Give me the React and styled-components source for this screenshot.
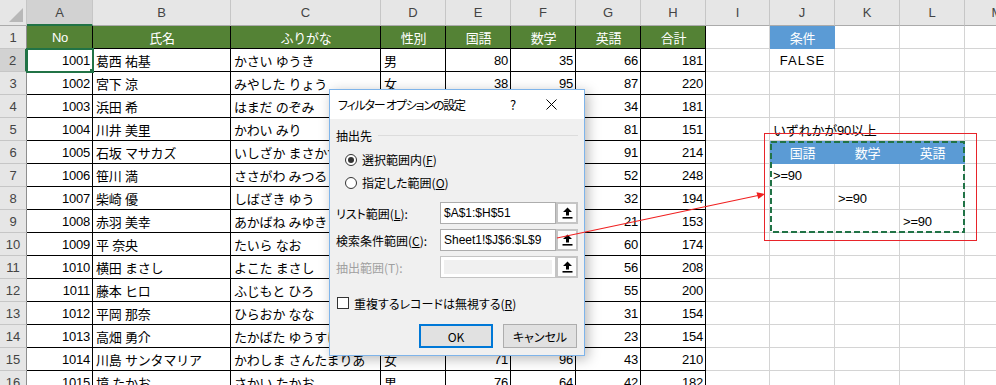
import styled, { createGlobalStyle } from "styled-components";

const GlobalStyle = createGlobalStyle`
  body {
    margin: 0;
    overflow: hidden;
    background: #fff;
    font-family: "Liberation Sans", "Noto Sans CJK JP", sans-serif;
  }
`;

const COLS = [27, 66, 138, 150, 65, 65, 65, 65, 65, 64, 65, 65, 65, 65];
const LETTERS = ["A", "B", "C", "D", "E", "F", "G", "H", "I", "J", "K", "L", "M"];

const HEADERS = ["No", "氏名", "ふりがな", "性別", "国語", "数学", "英語", "合計"];

const ROWS = [
  [1001, "葛西 祐基", "かさい ゆうき", "男", 80, 35, 66, 181],
  [1002, "宮下 涼", "みやした りょう", "女", 38, 95, 87, 220],
  [1003, "浜田 希", "はまだ のぞみ", "女", 72, 75, 34, 181],
  [1004, "川井 美里", "かわい みり", "女", 35, 35, 81, 151],
  [1005, "石坂 マサカズ", "いしざか まさかず", "男", 60, 63, 91, 214],
  [1006, "笹川 満", "ささがわ みつる", "男", 98, 98, 52, 248],
  [1007, "柴崎 優", "しばざき ゆう", "男", 80, 82, 32, 194],
  [1008, "赤羽 美幸", "あかばね みゆき", "女", 66, 66, 21, 153],
  [1009, "平 奈央", "たいら なお", "女", 57, 57, 60, 174],
  [1010, "横田 まさし", "よこた まさし", "男", 76, 76, 56, 208],
  [1011, "藤本 ヒロ", "ふじもと ひろ", "男", 72, 73, 55, 200],
  [1012, "平岡 那奈", "ひらおか なな", "女", 61, 62, 31, 154],
  [1013, "高畑 勇介", "たかばた ゆうすけ", "男", 65, 66, 23, 154],
  [1014, "川島 サンタマリア", "かわしま さんたまりあ", "女", 71, 96, 43, 210],
  [1015, "境 たかお", "さかい たかお", "男", 76, 64, 42, 182],
];

// J, K, L の内容（行番号ごと）
const SIDE = {
  1: [{ text: "条件", tone: "blue", align: "center" }, {}, {}],
  2: [{ text: "FALSE", align: "center", wide: true }, {}, {}],
  5: [{ text: "いずれかが90以上", spill: true }, {}, {}],
  6: [
    { text: "国語", tone: "blue", align: "center" },
    { text: "数学", tone: "blue", align: "center" },
    { text: "英語", tone: "blue", align: "center" },
  ],
  7: [{ text: ">=90" }, {}, {}],
  8: [{}, { text: ">=90" }, {}],
  9: [{}, {}, { text: ">=90" }],
};

const TONES = {
  data: { bg: "#fff", line: "#000", color: "#000" },
  head: { bg: "#548235", line: "#000", color: "#fff" },
  grid: { bg: "transparent", line: "#d4d4d4", color: "#000" },
  blue: { bg: "#5b9bd5", line: "#5b9bd5", color: "#fff" },
};

const Page = styled.div`
  position: relative;
  width: 996px;
  height: 385px;
  overflow: hidden;
  background: #fff;
`;

const Sheet = styled.div`
  display: grid;
  grid-template-columns: ${COLS.map((w) => w + "px").join(" ")};
  grid-template-rows: 26px repeat(16, 23px);
`;

const ColHead = styled.div`
  box-sizing: border-box;
  display: flex;
  align-items: center;
  justify-content: center;
  position: relative;
  background: ${(p) => (p.$active ? "#d2d2d2" : "#e6e6e6")};
  border-right: 1px solid #c6c6c6;
  border-bottom: ${(p) => (p.$active ? "2px solid #217346" : "1px solid #ababab")};
  color: #444;
  font-size: 13px;
`;

const CornerMark = styled.span`
  position: absolute;
  right: 3px;
  bottom: 3px;
  width: 0;
  height: 0;
  border-left: 14px solid transparent;
  border-bottom: 14px solid #b8b8b8;
`;

const RowHead = styled.div`
  box-sizing: border-box;
  display: flex;
  align-items: center;
  justify-content: center;
  background: ${(p) => (p.$active ? "#d2d2d2" : "#e6e6e6")};
  border-right: ${(p) => (p.$active ? "2px solid #217346" : "1px solid #8e8e8e")};
  border-bottom: 1px solid #c6c6c6;
  color: #444;
  font-size: 13px;
`;

const Cell = styled.div`
  box-sizing: border-box;
  position: relative;
  display: flex;
  align-items: center;
  justify-content: ${(p) =>
    p.$align === "right" ? "flex-end" : p.$align === "center" ? "center" : "flex-start"};
  padding: 0 2px 0 3px;
  background: ${(p) => TONES[p.$tone].bg};
  color: ${(p) => TONES[p.$tone].color};
  border-right: 1px solid ${(p) => TONES[p.$tone].line};
  border-bottom: 1px solid ${(p) => TONES[p.$tone].line};
  font-size: 13px;
  letter-spacing: ${(p) => (p.$wide ? "1px" : "-0.2px")};
  white-space: nowrap;
  overflow: ${(p) => (p.$spill ? "visible" : "hidden")};
  z-index: ${(p) => (p.$active ? 2 : 0)};
  outline: ${(p) => (p.$active ? "2px solid #217346" : "none")};
  outline-offset: -1px;

  &::after {
    content: "";
    display: ${(p) => (p.$active ? "block" : "none")};
    position: absolute;
    right: -4px;
    bottom: -4px;
    width: 5px;
    height: 5px;
    background: #217346;
    border: 1px solid #fff;
  }
`;

const Overlay = styled.svg`
  position: absolute;
  left: 0;
  top: 0;
  pointer-events: none;
  z-index: 20;
`;

/* ---- dialog ---- */

const Dialog = styled.div`
  position: absolute;
  left: 329px;
  top: 89px;
  width: 256px;
  box-sizing: border-box;
  border: 1px solid #7eb4ea;
  background: #f0f0f0;
  box-shadow: 3px 3px 12px rgba(0, 0, 0, 0.28);
  font-family: "Noto Sans CJK JP", sans-serif;
  font-feature-settings: "palt";
  font-size: 12px;
  color: #000;
  z-index: 10;
`;

const TitleBar = styled.div`
  display: flex;
  align-items: center;
  height: 29px;
  padding: 0 18px 0 8px;
  background: #fff;
  gap: 8px;
`;

const Title = styled.div`
  flex: 1;
  letter-spacing: -1.2px;
`;

const TitleButton = styled.div`
  width: 30px;
  display: flex;
  justify-content: center;
  font-size: 13px;
`;

const Body = styled.div`
  display: flex;
  flex-direction: column;
  padding: 6px 6px 7px 6px;
`;

const GroupHead = styled.div`
  display: flex;
  align-items: center;
  height: 20px;
  gap: 6px;

  &::after {
    content: "";
    flex: 1;
    height: 1px;
    background: #dcdcdc;
  }
`;

const RadioList = styled.div`
  display: flex;
  flex-direction: column;
  padding: 3px 0 0 9px;
`;

const OptionRow = styled.label`
  display: flex;
  align-items: center;
  height: ${(p) => p.$h || 23}px;
  gap: 5px;
  margin-top: ${(p) => p.$mt || 0}px;
`;

const Radio = styled.span`
  box-sizing: border-box;
  width: 12px;
  height: 12px;
  border-radius: 50%;
  border: 1px solid #333;
  background: #fff;
  display: flex;
  align-items: center;
  justify-content: center;

  &::after {
    content: "";
    display: ${(p) => (p.$checked ? "block" : "none")};
    width: 6px;
    height: 6px;
    border-radius: 50%;
    background: #333;
  }
`;

const Check = styled.span`
  box-sizing: border-box;
  width: 12px;
  height: 12px;
  border: 1px solid #333;
  background: #fff;
  margin-left: 1px;
`;

const FieldRow = styled.div`
  display: flex;
  align-items: center;
  height: 22px;
  margin-top: ${(p) => p.$mt}px;
`;

const FieldLabel = styled.div`
  width: 104px;
  color: ${(p) => (p.$disabled ? "#a0a0a0" : "#000")};
`;

const FieldInput = styled.div`
  box-sizing: border-box;
  width: 116px;
  height: 22px;
  display: flex;
  align-items: center;
  padding: ${(p) => (p.$disabled ? "3px" : "0 3px")};
  border: 1px solid ${(p) => (p.$disabled ? "#c4c4c4" : "#adadad")};
  background: #fff;
  font-family: "Liberation Sans", sans-serif;
  font-size: 12px;
`;

const DisabledFill = styled.div`
  width: 100%;
  height: 100%;
  background: #f0f0f0;
`;

const PickButton = styled.div`
  box-sizing: border-box;
  width: 22px;
  height: 22px;
  display: flex;
  align-items: center;
  justify-content: center;
  border: 2px solid #c4c4c4;
  background: #fcfcfc;
`;

const Buttons = styled.div`
  display: flex;
  justify-content: flex-end;
  gap: 10px;
  margin-top: 11px;
  padding-right: 1px;
`;

const Button = styled.div`
  box-sizing: border-box;
  width: 74px;
  height: 24px;
  display: flex;
  align-items: center;
  justify-content: center;
  background: #e1e1e1;
  border: ${(p) => (p.$primary ? "2px solid #0078d7" : "1px solid #adadad")};
`;

function PickIcon() {
  return (
    <svg width="11" height="12" viewBox="0 0 11 12">
      <path d="M5.5 0.5 L10 5 H7 V8.5 H4 V5 H1 Z" fill="#000" />
      <rect x="0.5" y="10" width="10" height="1.6" fill="#000" />
    </svg>
  );
}

function CloseIcon() {
  return (
    <svg width="11" height="11" viewBox="0 0 11 11">
      <path d="M0.5 0.5 L10.5 10.5 M10.5 0.5 L0.5 10.5" stroke="#000" strokeWidth="1" />
    </svg>
  );
}

function FilterDialog() {
  return (
    <Dialog>
      <TitleBar>
        <Title>フィルター オプションの設定</Title>
        <TitleButton>?</TitleButton>
        <TitleButton>
          <CloseIcon />
        </TitleButton>
      </TitleBar>
      <Body>
        <GroupHead>抽出先</GroupHead>
        <RadioList>
          <OptionRow>
            <Radio $checked />
            <span>
              選択範囲内(<u>F</u>)
            </span>
          </OptionRow>
          <OptionRow>
            <Radio />
            <span>
              指定した範囲(<u>O</u>)
            </span>
          </OptionRow>
        </RadioList>
        <FieldRow $mt={8}>
          <FieldLabel>
            リスト範囲(<u>L</u>):
          </FieldLabel>
          <FieldInput>$A$1:$H$51</FieldInput>
          <PickButton>
            <PickIcon />
          </PickButton>
        </FieldRow>
        <FieldRow $mt={5}>
          <FieldLabel>
            検索条件範囲(<u>C</u>):
          </FieldLabel>
          <FieldInput>Sheet1!$J$6:$L$9</FieldInput>
          <PickButton>
            <PickIcon />
          </PickButton>
        </FieldRow>
        <FieldRow $mt={5}>
          <FieldLabel $disabled>抽出範囲(T):</FieldLabel>
          <FieldInput $disabled>
            <DisabledFill />
          </FieldInput>
          <PickButton>
            <PickIcon />
          </PickButton>
        </FieldRow>
        <OptionRow $h={20} $mt={15}>
          <Check />
          <span>
            重複するレコードは無視する(<u>R</u>)
          </span>
        </OptionRow>
        <Buttons>
          <Button $primary>OK</Button>
          <Button>キャンセル</Button>
        </Buttons>
      </Body>
    </Dialog>
  );
}

function SheetGrid() {
  const cells = [];

  cells.push(
    <ColHead key="corner">
      <CornerMark />
    </ColHead>
  );
  LETTERS.forEach((l, i) =>
    cells.push(
      <ColHead key={"c" + l} $active={i === 0}>
        {l}
      </ColHead>
    )
  );

  for (let r = 1; r <= 16; r++) {
    cells.push(
      <RowHead key={"r" + r} $active={r === 2}>
        {r}
      </RowHead>
    );

    for (let c = 0; c < 8; c++) {
      if (r === 1) {
        cells.push(
          <Cell key={`${r}-${c}`} $tone="head" $align="center">
            {HEADERS[c]}
          </Cell>
        );
      } else {
        const v = ROWS[r - 2][c];
        const isNum = typeof v === "number";
        cells.push(
          <Cell
            key={`${r}-${c}`}
            $tone="data"
            $align={isNum ? "right" : "left"}
            $active={r === 2 && c === 0}
          >
            {v}
          </Cell>
        );
      }
    }

    // I
    cells.push(<Cell key={`${r}-I`} $tone="grid" />);

    // J, K, L
    const side = SIDE[r] || [{}, {}, {}];
    side.forEach((s, i) =>
      cells.push(
        <Cell
          key={`${r}-s${i}`}
          $tone={s.tone || "grid"}
          $align={s.align || "left"}
          $spill={s.spill}
          $wide={s.wide}
        >
          {s.text}
        </Cell>
      )
    );

    // M
    cells.push(<Cell key={`${r}-M`} $tone="grid" />);
  }

  return <Sheet>{cells}</Sheet>;
}

export default function App() {
  return (
    <Page>
      <GlobalStyle />
      <SheetGrid />
      <FilterDialog />
      <Overlay width="996" height="385">
        <rect x="764.5" y="133.5" width="212" height="107" fill="none" stroke="#e8242a" strokeWidth="1" />
        <rect
          x="771"
          y="142"
          width="193"
          height="90"
          fill="none"
          stroke="#217346"
          strokeWidth="2"
          strokeDasharray="6 3"
        />
        <line x1="557" y1="238" x2="758" y2="195.5" stroke="#f02020" strokeWidth="1.2" />
        <path d="M765 194 L756.5 192.3 L758.3 199 Z" fill="#f02020" />
      </Overlay>
    </Page>
  );
}
